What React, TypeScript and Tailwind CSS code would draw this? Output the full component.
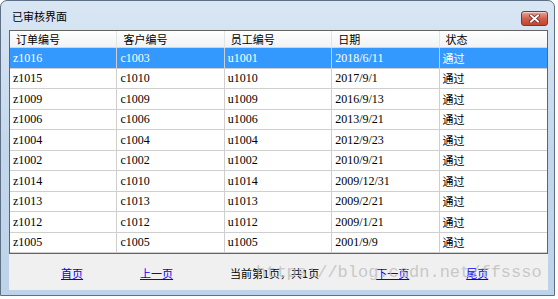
import React from 'react';

const cjk = { fontFamily: '"Noto Sans CJK SC", "Noto Sans", sans-serif' };
const latin = { fontFamily: '"Liberation Serif", "Noto Sans CJK SC", serif' };

const headers = ['订单编号', '客户编号', '员工编号', '日期', '状态'];

const rows = [
  ['z1016', 'c1003', 'u1001', '2018/6/11', '通过'],
  ['z1015', 'c1010', 'u1010', '2017/9/1', '通过'],
  ['z1009', 'c1009', 'u1009', '2016/9/13', '通过'],
  ['z1006', 'c1006', 'u1006', '2013/9/21', '通过'],
  ['z1004', 'c1004', 'u1004', '2012/9/23', '通过'],
  ['z1002', 'c1002', 'u1002', '2010/9/21', '通过'],
  ['z1014', 'c1010', 'u1014', '2009/12/31', '通过'],
  ['z1013', 'c1013', 'u1013', '2009/2/21', '通过'],
  ['z1012', 'c1012', 'u1012', '2009/1/21', '通过'],
  ['z1005', 'c1005', 'u1005', '2001/9/9', '通过'],
];

const CloseButton = () => (
  <div className="self-end mb-[4px] w-[27px] h-[15px] rounded-[3px] border border-[#8c3127] bg-gradient-to-b from-[#e6a396] via-[#d2604d] to-[#c2442f] flex items-center justify-center shadow-[inset_0_1px_0_rgba(255,255,255,0.5)]">
    <svg width="11" height="9" viewBox="0 0 11 9">
      <path d="M2 1.5 L9 7.5 M9 1.5 L2 7.5" stroke="#5a1a12" strokeWidth="3.2" strokeLinecap="square" />
      <path d="M2 1.5 L9 7.5 M9 1.5 L2 7.5" stroke="#ffffff" strokeWidth="2" strokeLinecap="square" />
    </svg>
  </div>
);

const App = () => {
  return (
    <div className="relative w-[558px] h-[299px] bg-white overflow-hidden">
      <div className="w-[555px] h-[296px] flex flex-col border border-[#5d7085] rounded-t-[7px] bg-gradient-to-b from-[#d9e6f4] via-[#c3d7ec] to-[#bdd3ea]">
        {/* title bar */}
        <div className="h-[29px] flex justify-between pl-[11px] pr-[6px]">
          <span className="self-center text-[11px] text-black mt-[2px]" style={cjk}>
            已审核界面
          </span>
          <CloseButton />
        </div>

        {/* client area */}
        <div className="flex-1 flex flex-col pl-[8px] pr-[6px] pb-[5px]">
          <div className="flex-1 flex flex-col bg-[#f0f0f0]">
            {/* grid */}
            <div className="border border-[#646464] bg-white">
              <div className="grid grid-cols-5 h-[17px] bg-gradient-to-b from-white to-[#f1f2f4] border-b border-[#d5d5d5]">
                {headers.map((h, i) => (
                  <div
                    key={h}
                    className={`flex items-center pl-[6px] text-[11px] text-black ${i < 4 ? 'border-r border-[#e2e3e5]' : ''}`}
                    style={cjk}
                  >
                    {h}
                  </div>
                ))}
              </div>
              {rows.map((r, ri) => (
                <div
                  key={r[0]}
                  className={`grid grid-cols-5 h-[20.5px] border-b border-[#cfcfcf] ${ri === 0 ? 'bg-[#3399ff] text-white' : 'text-black'}`}
                >
                  {r.map((c, ci) => (
                    <div
                      key={ci}
                      className={`flex items-center pl-[3px] ${ci === 4 ? 'text-[11px]' : 'text-[12px]'} ${ci < 4 ? 'border-r border-[#cfcfcf]' : ''}`}
                      style={ci === 4 ? cjk : latin}
                    >
                      {c}
                    </div>
                  ))}
                </div>
              ))}
            </div>

            {/* pager */}
            <div className="flex-1 flex items-center pl-[52px] gap-[57px] pt-[2px] text-[11px]" style={cjk}>
              <a href="#" className="text-[#0000ff] underline">首页</a>
              <a href="#" className="text-[#0000ff] underline">上一页</a>
              <span className="text-black">当前第1页，共1页</span>
              <a href="#" className="text-[#0000ff] underline">下一页</a>
              <a href="#" className="text-[#0000ff] underline">尾页</a>
            </div>
          </div>
        </div>
      </div>

      {/* watermark */}
      <div
        className="absolute left-[256px] top-[264px] text-[17px] leading-none text-[#bdbdbd]/80 pointer-events-none whitespace-nowrap"
        style={{ fontFamily: '"Liberation Mono", monospace' }}
      >
        https://blog.csdn.net/ffssso
      </div>
    </div>
  );
};

export default App;
